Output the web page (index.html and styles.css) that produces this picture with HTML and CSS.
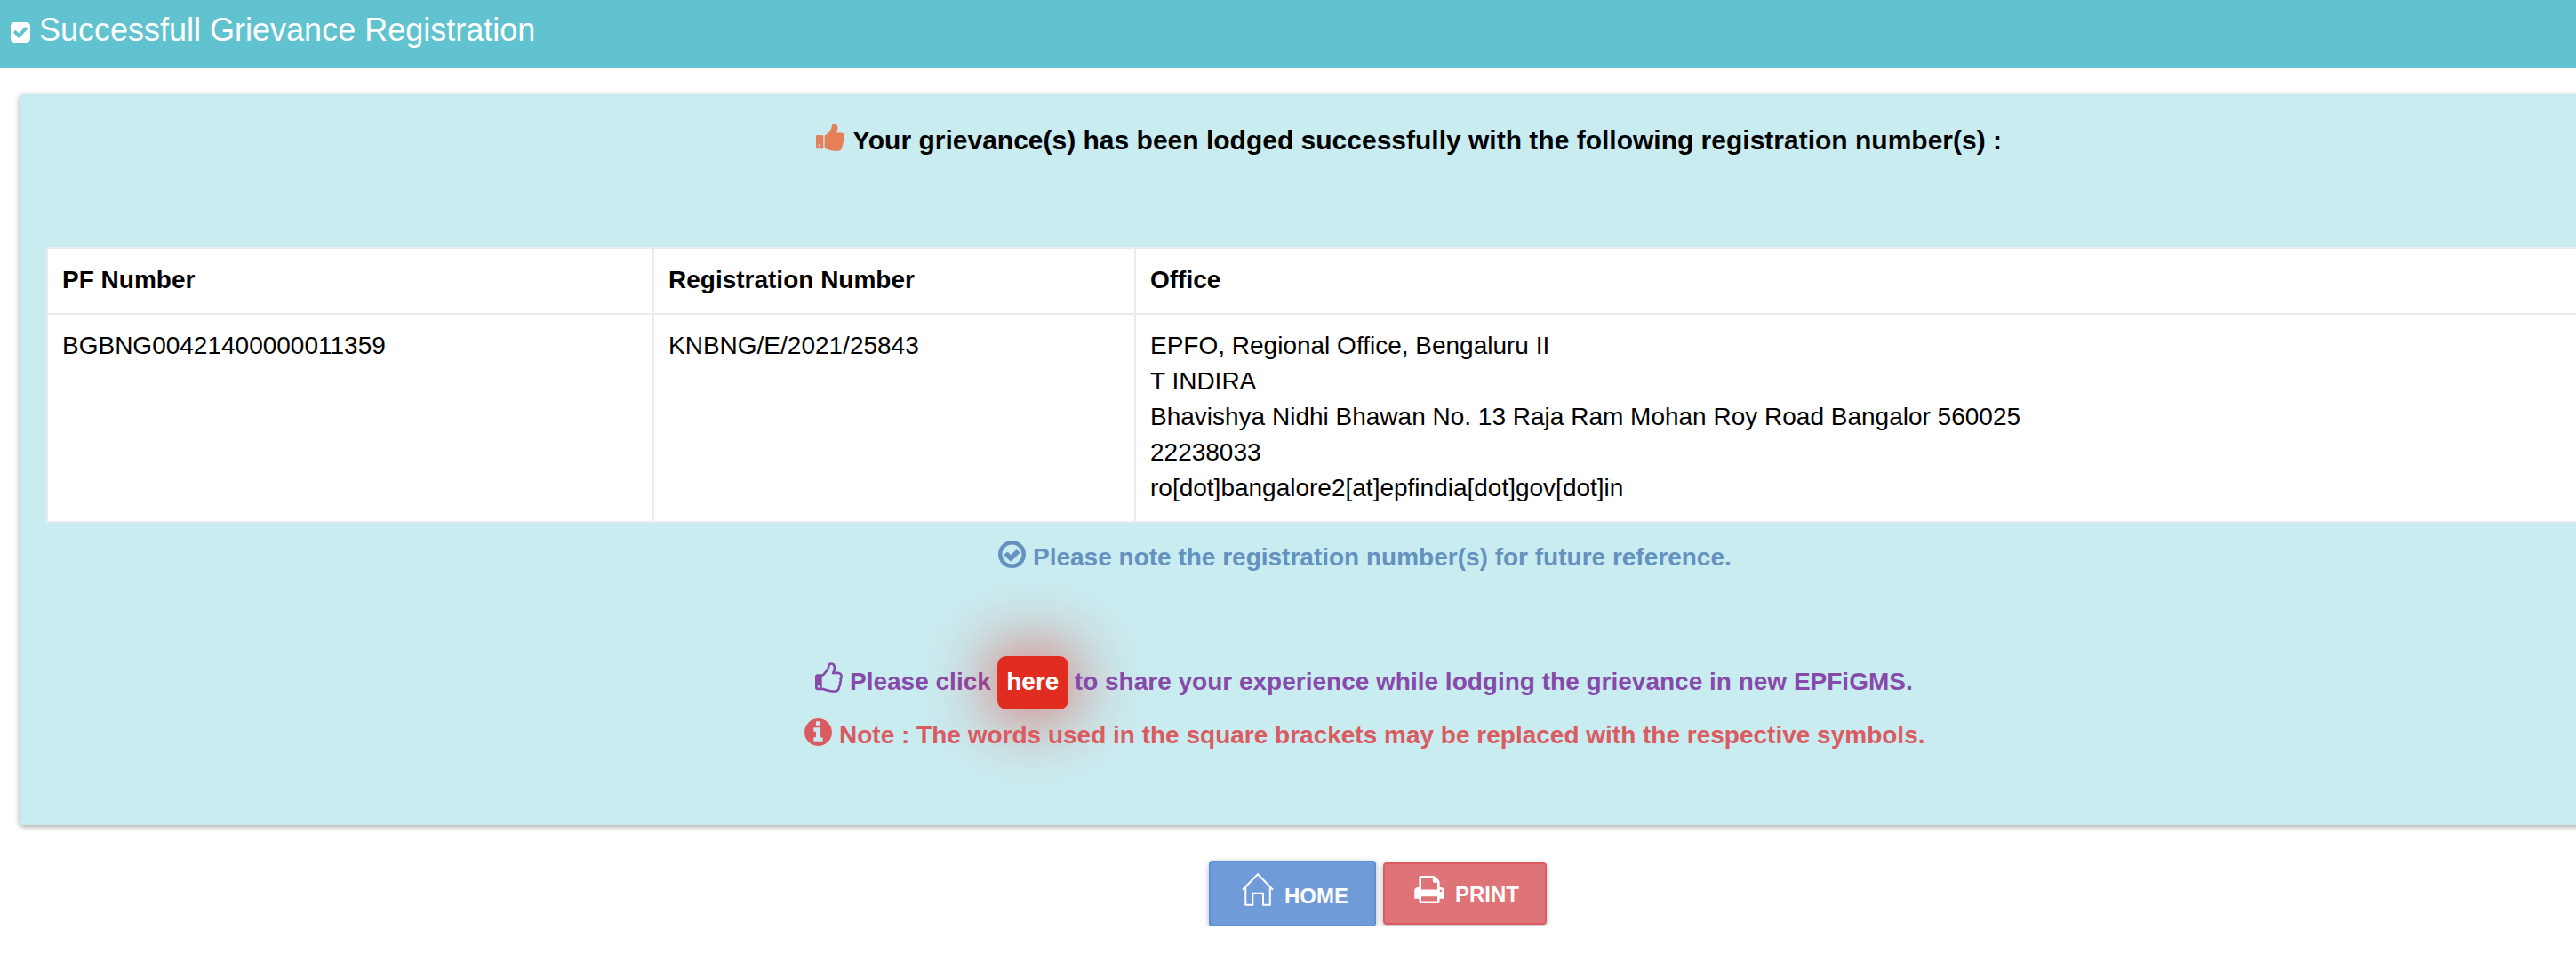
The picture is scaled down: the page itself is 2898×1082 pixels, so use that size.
FILE: index.html
```html
<!DOCTYPE html>
<html lang="en">
<head>
<meta charset="utf-8">
<title>Successfull Grievance Registration</title>
<link rel="stylesheet" href="styles.css">
</head>
<body>
<header class="topbar">
  <svg class="topbar-icon" viewBox="0 0 1536 1536" preserveAspectRatio="none"><path d="M685 1171l614-614q19-19 19-45t-19-45l-102-102q-19-19-45-19t-45 19l-467 467-211-211q-19-19-45-19t-45 19l-102 102q-19 19-19 45t19 45l358 358q19 19 45 19t45-19zm851-883v960q0 119-84.5 203.5t-203.5 84.5h-960q-119 0-203.5-84.5t-84.5-203.5v-960q0-119 84.5-203.5t203.5-84.5h960q119 0 203.5 84.5t84.5 203.5z"/></svg>
  <h1 class="topbar-title">Successfull Grievance Registration</h1>
</header>
<main class="panel">
  <p class="line lodged">
    <svg class="icon icon-lodged" viewBox="0 0 1600 1536"><path fill-rule="evenodd" d="M256 1216q0-26-19-45t-45-19-45 19-19 45 19 45 45 19 45-19 19-45zM416 704v640q0 26-19 45t-45 19h-288q-26 0-45-19t-19-45v-640q0-26 19-45t45-19h288q26 0 45 19t19 45zM1600 704q0 86-55 149 15 44 15 76 3 76-43 137 17 56 0 117-15 57-54 94 9 112-49 181-64 76-197 78h-129q-66 0-144-15.5t-121.5-29-120.5-39.5q-123-43-158-44-26-1-45-19.5t-19-44.5v-641q0-25 18-43.5t43-20.5q24-2 76-59t101-121q68-87 101-120 18-18 31-48t17.5-48.5 13.5-60.5q7-39 12.5-61t19.5-52 34-50q19-19 45-19 46 0 82.5 10.5t60 26 40 40.5 24 45 12 50 5 45 .5 39q0 38-9.5 76t-19 60-27.5 56q-3 6-10 18t-11 22-8 24h277q78 0 135 57t57 135z"/></svg>
    <span class="text">Your grievance(s) has been lodged successfully with the following registration number(s) :</span>
  </p>
  <table class="grid">
    <colgroup><col class="col-pf"><col class="col-reg"><col></colgroup>
    <thead>
      <tr><th>PF Number</th><th>Registration Number</th><th>Office</th></tr>
    </thead>
    <tbody>
      <tr>
        <td>BGBNG00421400000011359</td>
        <td>KNBNG/E/2021/25843</td>
        <td>EPFO, Regional Office, Bengaluru II<br>T INDIRA<br>Bhavishya Nidhi Bhawan No. 13 Raja Ram Mohan Roy Road Bangalor 560025<br>22238033<br>ro[dot]bangalore2[at]epfindia[dot]gov[dot]in</td>
      </tr>
    </tbody>
  </table>
  <p class="line reminder">
    <svg class="icon icon-round" viewBox="0 0 1536 1536"><path fill-rule="evenodd" d="M1171 723l-422 422q-19 19-45 19t-45-19l-294-294q-19-19-19-45t19-45l102-102q19-19 45-19t45 19l147 147 275-275q19-19 45-19t45 19l102 102q19 19 19 45t-19 45zM1312 768a544 544 0 1 0-1088 0a544 544 0 1 0 1088 0zM1536 768a768 768 0 1 1-1536 0a768 768 0 1 1 1536 0z"/></svg>
    <span class="text">Please note the registration number(s) for future reference.</span>
  </p>
  <p class="line feedback">
    <svg class="icon icon-feedback" viewBox="0 0 1536 1664"><path fill-rule="evenodd" d="M256 1344q0-26-19-45t-45-19-45 19-19 45 19 45 45 19 45-19 19-45zM1408 768q0-51-39-89.5t-89-38.5h-352q0-58 48-159.5t48-160.5q0-98-32-145t-128-47q-26 26-38 85t-30.5 125.5-59.5 109.5q-22 23-77 91-4 5-23 30t-31.5 41-34.5 42.5-40 44-38.5 35.5-40 27-35.5 9h-32v640h32q13 0 31.5 3t33 6.5 38 11 35 11.5 35.5 12.5 29 10.5q211 73 342 73h121q192 0 192-167 0-26-5-56 30-16 47.5-52.5t17.5-73.5-18-69q53-50 53-119 0-25-10-55.5t-25-47.5q32-1 53.5-47t21.5-81zM1536 767q0 89-49 163 9 33 9 69 0 77-38 144 3 21 3 43 0 101-60 178 1 139-85 219.5t-227 80.5h-129q-96 0-189.5-22.5t-216.5-65.5q-116-40-138-40h-288q-53 0-90.5-37.5t-37.5-90.5v-640q0-53 37.5-90.5t90.5-37.5h274q36-24 137-155 58-75 107-128 24-25 35.5-85.5t30.5-126.5 62-108q39-37 90-37 84 0 151 32.5t102 101.5 35 186q0 93-48 192h176q104 0 180 76t76 179z"/></svg>
    <span class="feedback-lead">Please click</span>
    <a class="here">here</a>
    <span class="feedback-rest">to share your experience while lodging the grievance in new EPFiGMS.</span>
  </p>
  <p class="line note">
    <svg class="icon icon-round" viewBox="0 0 1536 1536"><path d="M1024 1248v-160q0-14-9-23t-23-9h-96v-512q0-14-9-23t-23-9h-320q-14 0-23 9t-9 23v160q0 14 9 23t23 9h96v320h-96q-14 0-23 9t-9 23v160q0 14 9 23t23 9h448q14 0 23-9t9-23zM896 352v-160q0-14-9-23t-23-9h-192q-14 0-23 9t-9 23v160q0 14 9 23t23 9h192q14 0 23-9t9-23zM1536 768q0 209-103 385.5t-279.5 279.5-385.5 103-385.5-103-279.5-279.5-103-385.5 103-385.5 279.5-279.5 385.5-103 385.5 103 279.5 279.5 103 385.5z"/></svg>
    <span class="text">Note : The words used in the square brackets may be replaced with the respective symbols.</span>
  </p>
</main>
<nav class="actions">
  <button class="btn btn-home">
    <svg class="home-icon" viewBox="0 0 36 37"><path d="M1 18.7L18 1.2l17 17.5M4.300 15.500V35.700H12.300V22.700H24V35.700H31.800V15.500"/></svg>
    <span class="home-label">HOME</span>
  </button>
  <button class="btn btn-print">
    <svg class="print-icon" viewBox="0 0 1664 1536"><path d="M384 1408h896v-256h-896v256zM384 768h896v-384h-160q-40 0-68-28t-28-68v-160h-640v640zM1536 832q0-26-19-45t-45-19-45 19-19 45 19 45 45 19 45-19 19-45zM1664 832v416q0 13-9.500 22.500t-22.500 9.500h-224v160q0 40-28 68t-68 28h-960q-40 0-68-28t-28-68v-160h-224q-13 0-22.500-9.500t-9.500-22.500v-416q0-79 56.500-135.500t135.500-56.500h64v-544q0-40 28-68t68-28h672q40 0 88 20t76 48l152 152q28 28 48 76t20 88v256h64q79 0 135.500 56.500t56.500 135.500z" fill-rule="evenodd"/></svg>
    <span class="print-label">PRINT</span>
  </button>
</nav>
</body>
</html>
```
FILE: styles.css
```css
* { box-sizing: border-box; }
body {
  margin: 0;
  background: #fff;
  color: #000;
  font: 28px/40px "Liberation Sans", Arial, sans-serif;
  overflow: hidden;
}
svg { display: block; flex: none; fill: currentColor; }

.topbar {
  display: flex;
  align-items: flex-start;
  height: 76px;
  padding-left: 12px;
  background: #61c2d0;
  color: #fff;
}
.topbar-icon { width: 22px; height: 23px; margin-top: 25px; }
.topbar-title {
  margin: 14px 0 0 10px;
  font-size: 36px;
  font-weight: 400;
  line-height: 40px;
  white-space: nowrap;
}

.panel {
  height: 822px;
  margin: 30px -20px 0 22px;
  padding: 31px 0 0 30px;
  border-radius: 4px;
  background: #c9ecf0;
  box-shadow: 0 2px 6px rgba(0, 0, 0, .35);
}
.line {
  display: flex;
  align-items: flex-start;
  height: 40px;
  margin: 0;
  font-weight: 700;
  white-space: nowrap;
}
.text { margin-top: 1px; }
.lodged { padding-left: 866px; font-size: 30px; }
.icon-lodged { width: 32px; height: 31px; margin: 2px 9px 0 0; color: #e57f57; }
.icon-round { width: 31px; height: 31px; margin: 2px 8px 0 0; }

.grid {
  width: 2880px;
  margin-top: 101px;
  border-collapse: collapse;
  table-layout: fixed;
  background: #fff;
}
.col-pf { width: 682px; }
.col-reg { width: 542px; }
.grid th, .grid td {
  padding: 15px 17px 17px 16px;
  border: 2px solid #e7ecf1;
  text-align: left;
  vertical-align: top;
}

.reminder { margin-top: 18px; padding-left: 1071px; color: #6491bf; }
.feedback { height: 60px; margin-top: 92px; padding-left: 865px; color: #8749aa; }
.icon-feedback { width: 31px; height: 34px; margin: 7px 8px 0 0; }
.feedback-lead, .feedback-rest { margin-top: 9px; }
.here {
  width: 80px;
  height: 60px;
  margin: 0 7px 0 7px;
  padding-top: 9px;
  border-radius: 10px;
  background: #e12d20;
  box-shadow: 0 0 80px #e12d20;
  color: #fff;
  text-align: center;
}
.note { margin-top: 8px; padding-left: 853px; color: #da5b60; }

.actions { display: flex; align-items: center; gap: 8px; padding: 40px 0 0 1360px; }
.btn {
  display: flex;
  align-items: flex-start;
  padding: 0;
  border: 2px solid;
  border-radius: 4px;
  color: #fff;
  font: 700 24px/28px "Liberation Sans", Arial, sans-serif;
  box-shadow: 0 2px 6px rgba(0, 0, 0, .3);
}
.btn-home { width: 188px; height: 74px; border-color: #5b8fd9; background: #6f9cd9; }
.btn-print { width: 184px; height: 70px; border-color: #dc5b62; background: #df7478; }
.home-icon { width: 36px; height: 37px; margin: 12px 0 0 35px; fill: none; stroke: currentColor; stroke-width: 2; }
.home-label { margin: 24px 0 0 12px; }
.print-icon { width: 34px; height: 31px; margin: 13px 0 0 33px; }
.print-label { margin: 20px 0 0 12px; }
```
